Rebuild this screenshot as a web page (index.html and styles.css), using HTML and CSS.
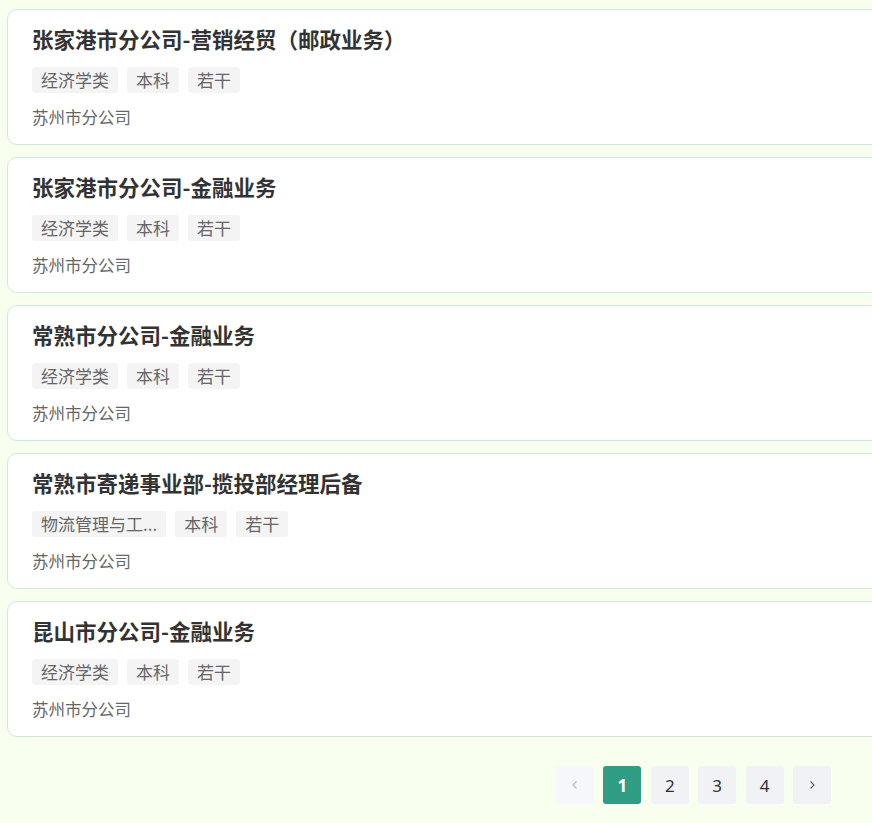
FILE: index.html
```html
<!DOCTYPE html>
<html lang="zh-CN">
<head>
    <meta charset="UTF-8">
    <meta name="viewport" content="width=device-width, initial-scale=1.0">
    <title>招聘岗位</title>
    <link rel="stylesheet" href="styles.css">
</head>
<body>
    <div class="job-list">
        <div class="job-card">
            <div class="job-title">张家港市分公司-营销经贸（邮政业务）</div>
            <div class="job-tags">
                <span class="tag">经济学类</span>
                <span class="tag">本科</span>
                <span class="tag">若干</span>
            </div>
            <div class="job-company">苏州市分公司</div>
        </div>
        <div class="job-card">
            <div class="job-title">张家港市分公司-金融业务</div>
            <div class="job-tags">
                <span class="tag">经济学类</span>
                <span class="tag">本科</span>
                <span class="tag">若干</span>
            </div>
            <div class="job-company">苏州市分公司</div>
        </div>
        <div class="job-card">
            <div class="job-title">常熟市分公司-金融业务</div>
            <div class="job-tags">
                <span class="tag">经济学类</span>
                <span class="tag">本科</span>
                <span class="tag">若干</span>
            </div>
            <div class="job-company">苏州市分公司</div>
        </div>
        <div class="job-card">
            <div class="job-title">常熟市寄递事业部-揽投部经理后备</div>
            <div class="job-tags">
                <span class="tag" title="物流管理与工程类">物流管理与工...</span>
                <span class="tag">本科</span>
                <span class="tag">若干</span>
            </div>
            <div class="job-company">苏州市分公司</div>
        </div>
        <div class="job-card">
            <div class="job-title">昆山市分公司-金融业务</div>
            <div class="job-tags">
                <span class="tag">经济学类</span>
                <span class="tag">本科</span>
                <span class="tag">若干</span>
            </div>
            <div class="job-company">苏州市分公司</div>
        </div>
    </div>

    <div class="pagination">
        <button class="page-btn prev" disabled>
            <svg width="12" height="12" viewBox="0 0 12 12"><path d="M7.5 2.5 4 6l3.5 3.5" fill="none" stroke="currentColor" stroke-width="1.2"/></svg>
        </button>
        <button class="page-btn active">1</button>
        <button class="page-btn">2</button>
        <button class="page-btn">3</button>
        <button class="page-btn">4</button>
        <button class="page-btn next">
            <svg width="12" height="12" viewBox="0 0 12 12"><path d="M4.5 2.5 8 6l-3.5 3.5" fill="none" stroke="currentColor" stroke-width="1.2"/></svg>
        </button>
    </div>
</body>
</html>
```

FILE: styles.css
```css
body, html {
    margin: 0;
    padding: 0;
    font-family: "Noto Sans CJK SC", "Noto Sans", sans-serif;
    background: #f8ffee;
    color: #333333;
    overflow: hidden;
}
.job-list {
    display: flex;
    flex-direction: column;
    gap: 12px;
    padding: 9px 0 0 7px;
}
.job-card {
    width: 920px;
    box-sizing: border-box;
    background: #ffffff;
    border: 1px solid #c9ecd8;
    border-radius: 10px;
    padding: 15px 24px 15px 24px;
}
.job-title {
    font-size: 21.5px;
    font-weight: bold;
    line-height: 28px;
    color: #333333;
}
.job-tags {
    display: flex;
    gap: 9px;
    margin-top: 14px;
}
.tag {
    display: inline-block;
    height: 26px;
    line-height: 26px;
    padding: 0 9px;
    font-size: 17px;
    color: #666666;
    background: #f4f4f5;
    border-radius: 3px;
    white-space: nowrap;
}
.job-company {
    margin-top: 12px;
    font-size: 16.5px;
    line-height: 24px;
    color: #666666;
}
.pagination {
    display: flex;
    justify-content: flex-end;
    gap: 9.4px;
    margin-top: 29px;
    padding-right: 41px;
}
.page-btn {
    width: 38px;
    height: 38px;
    padding: 0;
    border: none;
    border-radius: 3px;
    background: #f0f2f5;
    color: #303133;
    font-family: "Noto Sans", sans-serif;
    font-size: 17px;
    display: flex;
    align-items: center;
    justify-content: center;
    cursor: pointer;
}
.page-btn.active {
    background: #2e9d84;
    color: #ffffff;
    font-weight: bold;
}
.page-btn.prev {
    background: #f5f7fa;
    color: #b8bcc4;
    cursor: not-allowed;
}
.page-btn.next {
    color: #606266;
}
```
